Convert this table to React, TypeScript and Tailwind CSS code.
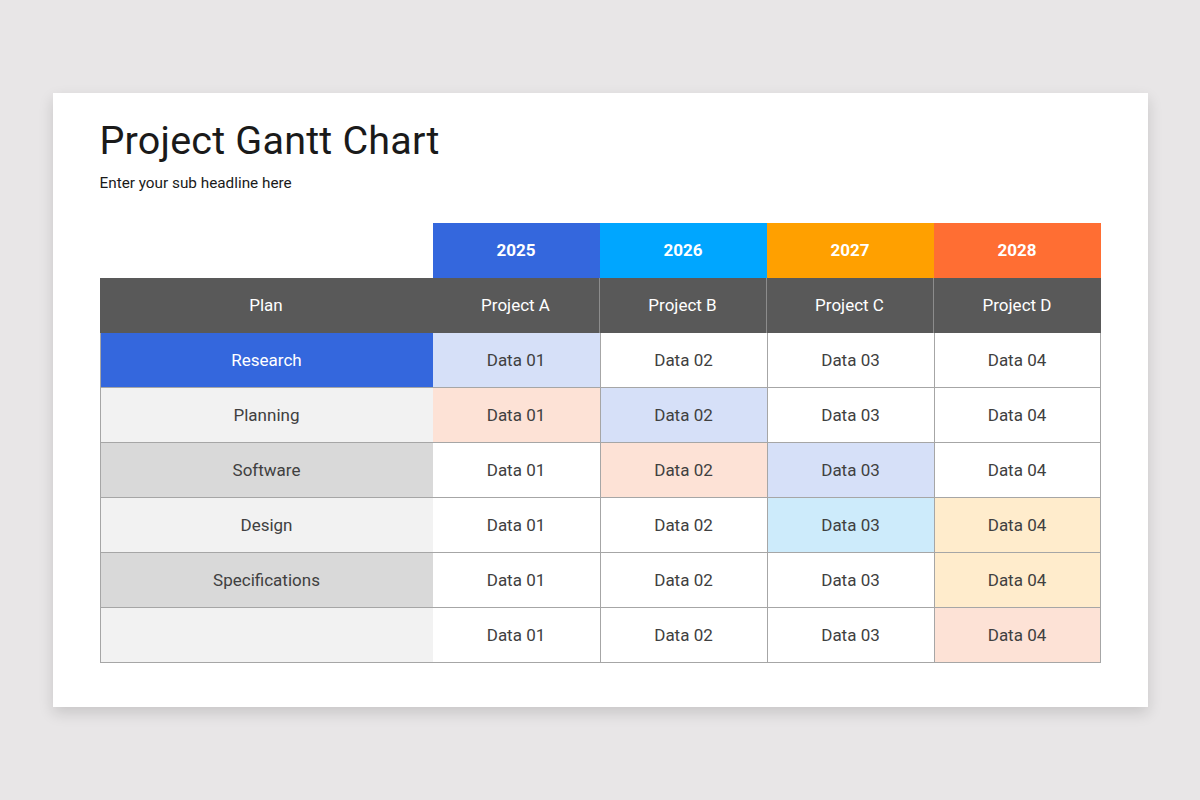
import React from "react";

const FONT = { fontFamily: "Roboto, 'Liberation Sans', sans-serif" };

const YEARS = [
  { label: "2025", bg: "bg-[#3467dd]" },
  { label: "2026", bg: "bg-[#00a6ff]" },
  { label: "2027", bg: "bg-[#ffa000]" },
  { label: "2028", bg: "bg-[#ff6e33]" },
];

const PROJECTS = ["Project A", "Project B", "Project C", "Project D"];

type Row = { plan: string; planBg: string; planText: string; cells: string[] };

const BLUE = "bg-[#d6e0f8]";
const PEACH = "bg-[#fde2d6]";
const CYAN = "bg-[#cdebfb]";
const CREAM = "bg-[#ffeccc]";
const WHITE = "bg-white";

const ROWS: Row[] = [
  {
    plan: "Research",
    planBg: "bg-[#3467dd]",
    planText: "text-white",
    cells: [BLUE, WHITE, WHITE, WHITE],
  },
  {
    plan: "Planning",
    planBg: "bg-[#f2f2f2]",
    planText: "text-[#404040]",
    cells: [PEACH, BLUE, WHITE, WHITE],
  },
  {
    plan: "Software",
    planBg: "bg-[#d9d9d9]",
    planText: "text-[#404040]",
    cells: [WHITE, PEACH, BLUE, WHITE],
  },
  {
    plan: "Design",
    planBg: "bg-[#f2f2f2]",
    planText: "text-[#404040]",
    cells: [WHITE, WHITE, CYAN, CREAM],
  },
  {
    plan: "Specifications",
    planBg: "bg-[#d9d9d9]",
    planText: "text-[#404040]",
    cells: [WHITE, WHITE, WHITE, CREAM],
  },
  {
    plan: "",
    planBg: "bg-[#f2f2f2]",
    planText: "text-[#404040]",
    cells: [WHITE, WHITE, WHITE, PEACH],
  },
];

export default function App() {
  return (
    <div
      className="flex h-[800px] w-full items-center justify-center bg-[#e8e6e7]"
      style={FONT}
    >
      <div className="h-[614px] w-[1095px] bg-white px-[47px] pt-[24px] shadow-[0_6px_14px_rgba(0,0,0,0.14)]">
        <h1 className="text-[39.5px] leading-[48px] tracking-[0.2px] text-[#1a1a1a]">
          Project Gantt Chart
        </h1>
        <p className="mt-[9px] text-[15.3px] leading-[18px] text-[#1a1a1a]">
          Enter your sub headline here
        </p>

        <div className="mt-[31px] grid w-[1001px] grid-cols-[333px_repeat(4,167px)] text-[17px]">
          {/* year row */}
          <div className="h-[55px]" />
          {YEARS.map((y) => (
            <div
              key={y.label}
              className={`flex h-[55px] items-center justify-center pt-px font-bold text-white ${y.bg}`}
            >
              {y.label}
            </div>
          ))}

          {/* header row */}
          <div className="flex h-[55px] items-center justify-center bg-[#595959] pt-px text-white">
            Plan
          </div>
          {PROJECTS.map((p, i) => (
            <div
              key={p}
              className={`flex h-[55px] items-center justify-center bg-[#595959] pt-px text-white ${
                i < 3 ? "border-r border-[#8c8c8c]" : ""
              }`}
            >
              {p}
            </div>
          ))}

          {/* data rows */}
          {ROWS.map((row, r) => (
            <React.Fragment key={r}>
              <div
                className={`flex h-[55px] items-center justify-center border-b border-l border-[#a6a6a6] pt-[2px] ${row.planBg} ${row.planText}`}
              >
                {row.plan}
              </div>
              {row.cells.map((bg, c) => (
                <div
                  key={c}
                  className={`flex h-[55px] items-center justify-center border-b border-[#a6a6a6] pt-[2px] text-[#404040] ${bg} ${
                    c === 0 ? "" : "border-l"
                  } ${c === 3 ? "border-r" : ""}`}
                >
                  Data 0{c + 1}
                </div>
              ))}
            </React.Fragment>
          ))}
        </div>
      </div>
    </div>
  );
}
